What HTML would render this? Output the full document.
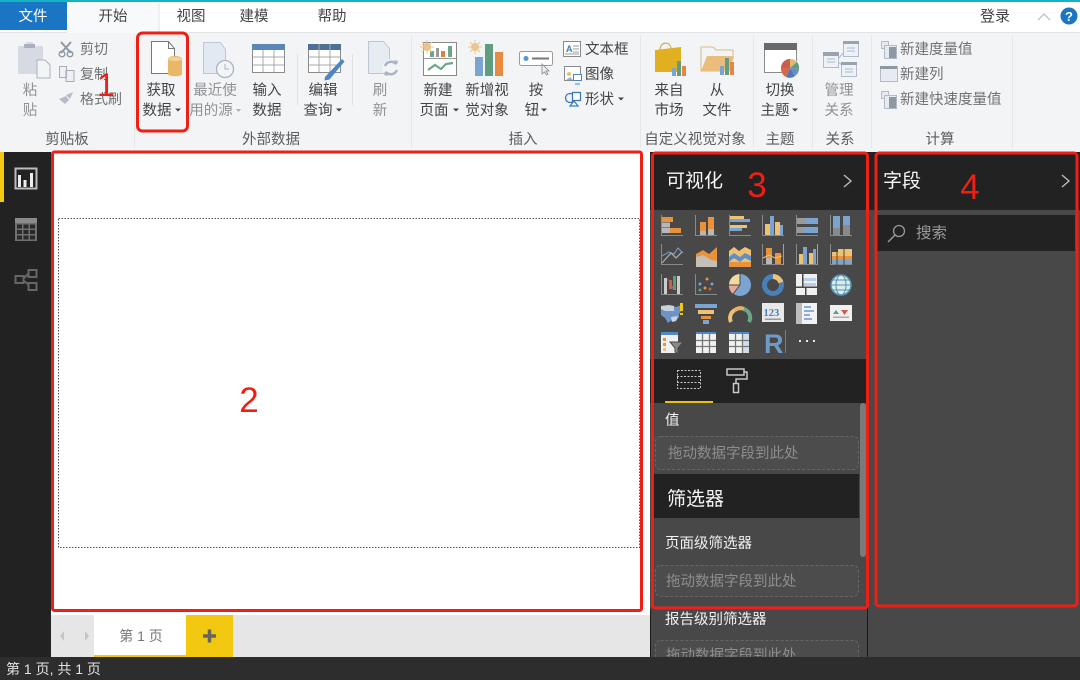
<!DOCTYPE html>
<html><head><meta charset="utf-8">
<style>
html,body{margin:0;padding:0;width:1080px;height:680px;overflow:hidden;background:#fff}
svg{display:block;filter:blur(.35px)}
text{font-family:"Liberation Sans","Noto Sans CJK SC",sans-serif;font-size:14.500px;fill:#444}
.c{text-anchor:middle}
.g{fill:#8f9296}
.d{fill:#6f7275}
.w{fill:#f2f2f2}
.dz{fill:#8d8d8d}
.r{font-size:35px;fill:#f01e14}
.t{font-size:19px;fill:#f5f5f5}
.l{fill:#5a5d60}
</style></head><body>
<svg width="1080" height="680" viewBox="0 0 1080 680" xmlns="http://www.w3.org/2000/svg">
<!-- title / tabs -->
<rect width="1080" height="33" fill="#fff"/>
<rect width="1080" height="2" fill="#12b5c0"/>
<rect y="2" width="67" height="28" fill="#1a76c4"/>
<rect x="67" y="2" width="92" height="31" fill="#f8f9fa"/>
<line x1="159" y1="2" x2="159" y2="32" stroke="#e4e4e4"/>
<text class="c" x="33" y="21" style="fill:#fff">文件</text>
<text class="c" x="113" y="21">开始</text>
<text class="c" x="191" y="21">视图</text>
<text class="c" x="254" y="21">建模</text>
<text class="c" x="332" y="21">帮助</text>
<text class="c" x="995" y="21" style="font-size:15px">登录</text>
<path d="M1038 20l6-6 6 6" fill="none" stroke="#c4c4c4" stroke-width="1.400"/>
<circle cx="1069" cy="16" r="8.500" fill="#1a76c4"/>
<text class="c" x="1069" y="21" style="fill:#fff;font-size:13px;font-weight:bold">?</text>
<!-- ribbon -->
<rect y="33" width="1080" height="119" fill="#f3f4f6"/>
<line x1="0" y1="32.500" x2="67" y2="32.500" stroke="#e2e3e5"/><line x1="159" y1="32.500" x2="1080" y2="32.500" stroke="#e2e3e5"/>
<g stroke="#e6e7e9"><path d="M134.500 36V148M411.500 36V148M640.500 36V148M753.500 36V148M812.500 36V148M871.500 36V148M1012.500 36V148"/><path d="M297.500 54V105M352.500 54V105" stroke="#e0e1e3"/></g>

<!-- paste -->
<path d="M18 46h8v-4h7v4h10v28H18z" fill="#d5dae3"/>
<rect x="24" y="44" width="11" height="4" fill="#a9b0bc"/>
<path d="M37 60h8l5 5v13H37z" fill="#f3f4f6" stroke="#a9b3c2"/>
<text class="c g" x="30" y="95">粘</text><text class="c g" x="30" y="115">贴</text>
<!-- cut, copy, brush -->
<path d="M61 42l10 11M71 42L61 53" stroke="#8f98a5" stroke-width="2" fill="none"/><circle cx="62" cy="54" r="2.800" fill="none" stroke="#8f98a5" stroke-width="1.400"/><circle cx="70" cy="54" r="2.800" fill="none" stroke="#8f98a5" stroke-width="1.400"/>
<path d="M59.500 66.500h7v11h-7zM66 70.500h8v11h-8z" fill="#eef0f3" stroke="#a8adb5"/>
<path d="M59 99l6 5 4-4-3-4zM66 95l7-3-3 7z" fill="#b6bcc6"/>
<text class="d" x="80" y="54" style="font-size:14px">剪切</text><text class="d" x="80" y="79" style="font-size:14px">复制</text><text class="d" x="80" y="104" style="font-size:14px">格式刷</text>

<!-- get data -->
<path d="M151.500 41.500h17l6 7v25h-23z" fill="#fff" stroke="#777"/><path d="M168.500 41.500v7h6" fill="none" stroke="#777"/>
<path d="M168 59c0-4 14-4 14 0v15c0 3-14 3-14 0z" fill="#e8b868"/><ellipse cx="175" cy="59" rx="7" ry="2" fill="#f2d192"/>
<text class="c" x="161" y="95">获取</text><text class="c" x="157" y="115">数据</text>
<path d="M175 108.500h6l-3 3z" fill="#444"/>
<!-- recent -->
<path d="M203.500 42.500h17l5 7v24h-22z" fill="#e2e9f3" stroke="#bcc8d8"/><circle cx="225" cy="69" r="8.500" fill="#f3f4f6" stroke="#a9b5c6" stroke-width="1.300"/><path d="M225 64v5h4" stroke="#a9b5c6" fill="none"/>
<text class="c g" x="215" y="95">最近使</text><text class="c g" x="211" y="115">用的源</text><path d="M236 109h5l-2.500 3z" fill="#b0b0b0"/>
<!-- enter data -->
<rect x="252.500" y="44.500" width="32" height="28" fill="#fff" stroke="#8b8b8b"/><rect x="252" y="44" width="33" height="6" fill="#5b86b8"/>
<path d="M263 50v22M274 50v22M253 57h31M253 65h31" stroke="#a8a8a8" fill="none"/>
<text class="c" x="267" y="95">输入</text><text class="c" x="267" y="115">数据</text>
<!-- edit query -->
<rect x="308.500" y="44.500" width="32" height="28" fill="#fff" stroke="#8b8b8b"/><rect x="308" y="44" width="33" height="6" fill="#4f6f96"/>
<path d="M319 44v28M330 44v28M309 57h31M309 65h31" stroke="#a8a8a8" fill="none"/>
<path d="M325 77l17-18 2.500 2.500-15 18-5 1z" fill="#4a86c5"/>
<text class="c" x="323" y="95">编辑</text><text class="c" x="318" y="115">查询</text><path d="M336 108.500h6l-3 3z" fill="#444"/>
<!-- refresh -->
<path d="M368.500 41.500h15l6 7v25h-21z" fill="#e7ecf3" stroke="#bcc6d4"/>
<circle cx="391" cy="68" r="9" fill="#f3f4f6"/>
<path d="M385 66a6.500 6.500 0 0 1 11-2M397 70a6.500 6.500 0 0 1-11 2" fill="none" stroke="#a9b5c3" stroke-width="2.500"/>
<path d="M394 60l4 1-1 4zM388 76l-4-1 1-4z" fill="#a9b5c3"/>
<text class="c g" x="380" y="95">刷</text><text class="c g" x="380" y="115">新</text>

<!-- new page -->
<rect x="423.500" y="42.500" width="33" height="33" fill="#fff" stroke="#8a8a8a"/>
<line x1="424" y1="58.500" x2="456" y2="58.500" stroke="#999"/>
<rect x="430" y="51" width="4" height="6" fill="#6aa687"/><rect x="441" y="51" width="4" height="6" fill="#e27f3f"/><rect x="448" y="46" width="4" height="11" fill="#6aa687"/><rect x="436" y="48" width="3" height="9" fill="#999"/>
<path d="M428 70l7-5 6 4 5-5 7-1" fill="none" stroke="#6aa687" stroke-width="2.200"/>
<circle cx="427" cy="47" r="4" fill="#e8bf80"/><path d="M427 40v14M420 47h14M422 42l10 10M432 42l-10 10" stroke="#ecc78f"/>
<text class="c" x="438" y="95">新建</text><text class="c" x="434" y="115">页面</text><path d="M453 108.500h6l-3 3z" fill="#444"/>
<!-- new visual -->
<circle cx="475" cy="47" r="4" fill="#ecc78f"/><path d="M475 40v14M468 47h14M470 42l10 10M480 42l-10 10" stroke="#ecc78f"/>
<rect x="475" y="57" width="8" height="19" fill="#7ba4cf"/><rect x="485" y="44" width="8" height="32" fill="#5f9c80"/><rect x="495" y="52" width="8" height="24" fill="#e88a42"/>
<text class="c" x="487" y="95">新增视</text><text class="c" x="487" y="115">觉对象</text>
<!-- button -->
<rect x="519.500" y="51.500" width="33" height="14" rx="2" fill="#fff" stroke="#9a9a9a"/>
<circle cx="526" cy="58.500" r="2.500" fill="#5b96c9"/><line x1="532" y1="58.500" x2="549" y2="58.500" stroke="#777" stroke-width="2"/>
<path d="M542 64l0 10 2.500-2 2 3 1.500-1-2-3 3 0z" fill="#eee" stroke="#888" stroke-width=".8"/>
<text class="c" x="536" y="95">按</text><text class="c" x="532" y="115">钮</text><path d="M541 108.500h6l-3 3z" fill="#444"/>
<!-- text box etc -->
<rect x="563.500" y="41.500" width="17" height="15" fill="#fff" stroke="#8a8a8a"/>
<text x="566" y="52" style="font-size:9px;fill:#3b79b8;font-weight:bold">A</text><path d="M573 46h6M573 49h6M573 52h6M565 54h14" stroke="#999"/>
<text x="585" y="54">文本框</text>
<rect x="564.500" y="66.500" width="16" height="14" fill="#fff" stroke="#8a8a8a"/><circle cx="569" cy="74" r="2" fill="#e8bf80"/><path d="M566 80l4-3 3 3z" fill="#8fb3d8"/>
<rect x="573.500" y="74.500" width="8" height="6" fill="#fff" stroke="#4a86c5"/><path d="M575 84h5" stroke="#4a86c5"/>
<text x="585" y="79">图像</text>
<circle cx="570" cy="98" r="4.500" fill="none" stroke="#3b79b8" stroke-width="1.300"/><rect x="572.500" y="92.500" width="8" height="8" fill="#fff" stroke="#3b79b8" stroke-width="1.300"/><path d="M570 106l4-5 4 5z" fill="#fff" stroke="#3b79b8" stroke-width="1.200"/>
<text x="585" y="104">形状</text><path d="M618 97.500h6l-3 3z" fill="#444"/>

<!-- market -->
<path d="M655 50l26-3v25h-26z" fill="#e0b020"/><path d="M660 50c0-9 11-9 11-1" fill="none" stroke="#c9b16a" stroke-width="1.200"/>
<rect x="672" y="68" width="4" height="8" fill="#7ba4cf"/><rect x="677" y="61" width="4" height="15" fill="#5f9c80"/><rect x="682" y="66" width="4" height="10" fill="#e8853f"/>
<text class="c" x="669" y="95">来自</text><text class="c" x="669" y="115">市场</text>
<!-- folder -->
<path d="M701 47h12l3 3h17v8l-4 13h-28z" fill="#f3f4f6" stroke="#d9bc88"/><path d="M701 71l6-15h27l-5 15z" fill="#ebbd7d"/>
<rect x="720" y="66" width="4" height="9" fill="#7ba4cf"/><rect x="725" y="58" width="4" height="17" fill="#5f9c80"/><rect x="730" y="62" width="4" height="13" fill="#e8853f"/>
<text class="c" x="717" y="95">从</text><text class="c" x="717" y="115">文件</text>

<!-- theme -->
<rect x="764.500" y="43.500" width="32" height="29" fill="#fff" stroke="#8b8b8b"/><rect x="764" y="43" width="33" height="7" fill="#6a6a6a"/>
<circle cx="790" cy="68" r="9.500" fill="#f3f4f6"/><path d="M790 68V59a9 9 0 0 1 7 3z" fill="#e9b56e"/><path d="M790 68l7-6a9 9 0 0 1 2 7z" fill="#5f9c80"/><path d="M790 68l9 1a9 9 0 0 1-4 7z" fill="#6b8fc0"/><path d="M790 68l5 8a9 9 0 0 1-9 1z" fill="#4c7bbd"/><path d="M790 68l-4 9a9 9 0 0 1-5-9z" fill="#d9674a"/><path d="M790 68h-9a9 9 0 0 1 9-9z" fill="#c9604d"/>
<text class="c" x="780" y="95">切换</text><text class="c" x="775" y="115">主题</text><path d="M792 108.500h6l-3 3z" fill="#444"/>
<!-- relations -->
<path d="M838 59l6-7M838 62l4 3" stroke="#b0bccd" fill="none"/>
<g fill="#eef1f6" stroke="#b0bccd"><rect x="823.500" y="52.500" width="15" height="15"/><rect x="843.500" y="41.500" width="15" height="15"/><rect x="841.500" y="62.500" width="15" height="14"/></g>
<path d="M823 52h16v4h-16zM843 41h16v3h-16zM841 62h16v3h-16z" fill="#9aa2ae"/>
<path d="M827 59h8M827 62h8M847 48h8M847 51h8M845 69h8M845 72h8" stroke="#b0bccd"/>
<text class="c g" x="839" y="95">管理</text><text class="c g" x="839" y="115">关系</text>

<!-- calc -->
<g fill="#e7ebf1" stroke="#b0bac8"><rect x="881.500" y="41.500" width="7" height="7"/><rect x="884.500" y="45.500" width="12" height="13"/><rect x="880.500" y="66.500" width="17" height="15"/><rect x="881.500" y="91.500" width="7" height="7"/><rect x="884.500" y="95.500" width="12" height="13"/></g>
<path d="M889 47h7v11h-7zM880 66h17v3h-17zM889 97h7v11h-7z" fill="#8f98a5"/>
<text class="d" x="900" y="54">新建度量值</text><text class="d" x="900" y="79">新建列</text><text class="d" x="900" y="104">新建快速度量值</text>

<text class="c l" x="67" y="144">剪贴板</text>
<text class="c l" x="271" y="144">外部数据</text>
<text class="c l" x="523" y="144">插入</text>
<text class="c l" x="695" y="144">自定义视觉对象</text>
<text class="c l" x="780" y="144">主题</text>
<text class="c l" x="840" y="144">关系</text>
<text class="c l" x="940" y="144">计算</text>

<!-- left rail -->
<rect y="152" width="51" height="505" fill="#222"/>
<rect y="152" width="4" height="50" fill="#f2c811"/>
<rect x="15.500" y="168.500" width="21" height="20" fill="none" stroke="#bcbcbc" stroke-width="2"/>
<path d="M18 187v-12h3v12zM23.500 187v-7h3v7zM30 187v-14h3v14z" fill="#eee"/>
<rect x="15" y="218" width="22" height="23" fill="#707070"/><rect x="15" y="218" width="22" height="5" fill="#8a8a8a"/>
<g fill="#2a2a2a"><rect x="17" y="224.500" width="5" height="4"/><rect x="23.500" y="224.500" width="5" height="4"/><rect x="30" y="224.500" width="5" height="4"/><rect x="17" y="230" width="5" height="4"/><rect x="23.500" y="230" width="5" height="4"/><rect x="30" y="230" width="5" height="4"/><rect x="17" y="235.500" width="5" height="4"/><rect x="23.500" y="235.500" width="5" height="4"/><rect x="30" y="235.500" width="5" height="4"/></g>
<g fill="none" stroke="#666" stroke-width="2"><rect x="15.500" y="276" width="8" height="7"/><rect x="28.500" y="270" width="8" height="7"/><rect x="28.500" y="283" width="8" height="7"/><path d="M24 278l4-4M24 281l4 3"/></g>

<!-- canvas -->
<rect x="51" y="152" width="591" height="463" fill="#fff"/>
<rect x="58.500" y="218.500" width="581" height="329" fill="none" stroke="#555" stroke-dasharray="1.500 1.500"/>
<rect x="51" y="615" width="600" height="42" fill="#e6e6e6"/>
<path d="M64 631l-4 5 4 5z" fill="#c4c4c4"/><path d="M85 631l4 5-4 5z" fill="#c4c4c4"/>
<rect x="94" y="615" width="92" height="40" fill="#fff"/><rect x="94" y="655" width="92" height="2" fill="#f2c811"/>
<text class="c" x="141" y="641" style="fill:#777;font-size:14px">第 1 页</text>
<rect x="186" y="615" width="47" height="42" fill="#f2c811"/>
<path d="M203 636h13M209.500 629.500v13" stroke="#66665e" stroke-width="3.500"/>

<!-- panel 3 -->
<rect x="650" y="152" width="218" height="505" fill="#484848"/>
<rect x="650" y="152" width="218" height="58" fill="#222"/>
<text class="t" x="666" y="187">可视化</text>
<path d="M844 175l7 6-7 6" fill="none" stroke="#bbb" stroke-width="1.400"/>

<!-- viz icons -->
<defs>
<path id="ax" d="M.5 0v20.500H22" fill="none" stroke="#8a8a8a"/>
</defs>
<g transform="translate(661 215)"><use href="#ax"/><rect x="1" y="2" width="11" height="5" fill="#e8923a"/><rect x="1" y="7.500" width="8" height="5" fill="#b8b8b8"/><rect x="9" y="13" width="11" height="5" fill="#e8923a"/><rect x="1" y="13" width="8" height="5" fill="#b8b8b8"/></g>
<g transform="translate(695 215)"><use href="#ax"/><rect x="5" y="7" width="6" height="13" fill="#e8923a"/><rect x="5" y="16" width="6" height="4" fill="#b8b8b8"/><rect x="13" y="2" width="6" height="18" fill="#e8923a"/><rect x="13" y="14" width="6" height="6" fill="#b8b8b8"/></g>
<g transform="translate(729 215)"><use href="#ax"/><rect x="1" y="1" width="14" height="3" fill="#eec273"/><rect x="1" y="4" width="20" height="3" fill="#7ba4d1"/><rect x="1" y="10" width="17" height="3" fill="#eec273"/><rect x="1" y="13" width="12" height="3" fill="#7ba4d1"/></g>
<g transform="translate(762 215)"><use href="#ax"/><rect x="3" y="9" width="5" height="11" fill="#eec273"/><rect x="8" y="1" width="4" height="19" fill="#7ba4d1"/><rect x="13" y="7" width="5" height="13" fill="#eec273"/><rect x="18" y="10" width="3" height="10" fill="#7ba4d1"/></g>
<g transform="translate(796 215)"><use href="#ax"/><rect x="1" y="3" width="9" height="6" fill="#9a9a9a"/><rect x="10" y="3" width="12" height="6" fill="#7ba4d1"/><rect x="1" y="12" width="7" height="6" fill="#9a9a9a"/><rect x="8" y="12" width="14" height="6" fill="#7ba4d1"/></g>
<g transform="translate(830 215)"><use href="#ax"/><rect x="3" y="1" width="7" height="12" fill="#7ba4d1"/><rect x="3" y="13" width="7" height="7" fill="#8a8a8a"/><rect x="13" y="1" width="7" height="9" fill="#7ba4d1"/><rect x="13" y="10" width="7" height="10" fill="#8a8a8a"/></g>

<g transform="translate(661 244)"><use href="#ax"/><path d="M1 19l9-10 5 5 6-6" fill="none" stroke="#b0a8a0" stroke-width="1.300"/><path d="M1 12l7-4 5 2 4-6 5 5" fill="none" stroke="#7ba4d1" stroke-width="1"/></g>
<g transform="translate(695 244)"><path d="M1 10l7-4 6 4 8-7v20H1z" fill="#e8923a"/><path d="M1 13l7-2 8 5 6 1v6H1z" fill="#c4c0b8"/></g>
<g transform="translate(729 244)"><path d="M0 7l5-4 5 4 6-4 6 3v17H0z" fill="#eec273"/><path d="M0 13l5-4 6 4 5-4 6 3v5l-6-3-5 4-6-4-5 4z" fill="#5f8fc6"/><path d="M0 18h22v5H0z" fill="#e8923a"/></g>
<g transform="translate(762 244)"><use href="#ax"/><path d="M21.500 0v21" stroke="#e8923a"/><rect x="4" y="4" width="6" height="16" fill="#e8923a"/><rect x="4" y="14" width="6" height="6" fill="#b8b8b8"/><rect x="13" y="9" width="6" height="11" fill="#e8923a"/><path d="M1 14l6-3 6 3 7-2" fill="none" stroke="#eec273"/></g>
<g transform="translate(796 244)"><use href="#ax"/><path d="M21.500 0v21" stroke="#e8923a"/><rect x="3" y="10" width="4" height="10" fill="#eec273"/><rect x="7" y="3" width="4" height="17" fill="#7ba4d1"/><rect x="13" y="9" width="4" height="11" fill="#eec273"/><rect x="17" y="5" width="3" height="15" fill="#7ba4d1"/></g>
<g transform="translate(830 244)"><use href="#ax"/><rect x="2" y="8" width="20" height="4" fill="#eec273"/><rect x="8" y="5" width="14" height="3" fill="#eec273"/><rect x="2" y="12" width="20" height="4" fill="#e8923a"/><rect x="2" y="16" width="20" height="4" fill="#7ba4d1"/><path d="M7 8v13M14 5v16" stroke="#484848"/></g>

<g transform="translate(661 274)"><use href="#ax"/><rect x="3" y="4" width="3" height="16" fill="#ccc"/><rect x="8" y="6" width="3" height="9" fill="#c9604d"/><rect x="12" y="2" width="3" height="14" fill="#5f9c80"/><rect x="16" y="2" width="3" height="18" fill="#ccc"/><path d="M6 6l2 0M11 12l1 3" stroke="#c9604d"/></g>
<g transform="translate(695 274)"><use href="#ax"/><g fill="#e8923a"><circle cx="12" cy="5" r="1.500"/><circle cx="10" cy="14" r="1.500"/></g><g fill="#7ba4d1"><circle cx="5" cy="10" r="1.500"/><circle cx="17" cy="10" r="1.500"/></g><g fill="#5f9c80"><circle cx="5" cy="16" r="1.500"/></g><g fill="#c9604d"><circle cx="15" cy="15" r="1.500"/></g></g>
<g transform="translate(729 274)"><circle cx="11" cy="11" r="11" fill="#7ba4d1"/><path d="M11 11V0A11 11 0 0 0 0 11z" fill="#f2d9a0"/><path d="M11 11H0A11 11 0 0 0 4 20z" fill="#e8a89a"/><path d="M11 11V0M11 11H0M11 11L4 20" stroke="#484848"/></g>
<g transform="translate(762 274)"><circle cx="11" cy="11" r="8.500" fill="none" stroke="#4a7fb8" stroke-width="5"/><path d="M11 2.500a8.500 8.500 0 0 1 8 6" fill="none" stroke="#eec273" stroke-width="5"/></g>
<g transform="translate(796 274)"><rect width="21" height="21" fill="#f0f0f0"/><path d="M7 4h13v3H7zM7 9h13v3H7z" fill="#b9cde4"/><rect y="12.500" width="21" height="1.500" fill="#484848"/><rect x="9" y="13" width="1.500" height="8" fill="#484848"/><rect x="6" width="1.500" height="13" fill="#484848"/></g>
<g transform="translate(830 274)"><circle cx="11" cy="11" r="10" fill="#d8efe8" stroke="#5a8fb5" stroke-width="1.500"/><ellipse cx="11" cy="11" rx="5" ry="10" fill="none" stroke="#5a8fb5"/><path d="M1 11h20M3 6h16M3 16h16" stroke="#5a8fb5"/></g>

<g transform="translate(661 303)"><path d="M0 3l8-1 7 2 6-2v5l-3 4v3l-3 4-4-1-4 3-3-5-4-3z" fill="#6f93c4"/><path d="M0 3l8-1 5 1v5H4L0 6zM10 14l7-1-2 5-4 1z" fill="#c9d3df"/><path d="M19 0h3v8h-3zM19 10h3v2h-3z" fill="#f2c811"/></g>
<g transform="translate(695 303)"><rect x="0" y="1" width="22" height="4" fill="#7ba4d1"/><rect x="3" y="7" width="16" height="4" fill="#eec273"/><rect x="6" y="13" width="10" height="3" fill="#e8923a"/><rect x="8" y="17" width="6" height="4" fill="#7ba4d1"/></g>
<g transform="translate(729 303)"><path d="M2 19a9 9 0 0 1 4-12" fill="none" stroke="#eec273" stroke-width="4"/><path d="M6 7a9 9 0 0 1 9-1" fill="none" stroke="#e8b060" stroke-width="4"/><path d="M15 6a9 9 0 0 1 5 13" fill="none" stroke="#6aa687" stroke-width="4"/></g>
<g transform="translate(762 303)"><rect width="22" height="19" fill="#e8e8e8"/><text x="1.500" y="13" style="font-family:'Liberation Serif',serif;font-size:10.500px;fill:#4a7fb8;font-weight:bold">123</text><rect x="3" y="15.500" width="16" height="1.500" fill="#999"/></g>
<g transform="translate(796 303)"><rect width="21" height="21" fill="#f2f2f2"/><rect x="0" width="6" height="21" fill="#bdbdbd"/><path d="M8 4h7M8 8h10M8 12h6M8 16h8" stroke="#6b95c9" stroke-width="1.500"/></g>
<g transform="translate(830 303)"><rect y="2" width="22" height="16" fill="#f0f0f0"/><path d="M3 11l3-4 3 4z" fill="#5f9c80"/><path d="M11 7h7l-3.500 5z" fill="#d9584a"/><rect x="3" y="13.500" width="16" height="1.500" fill="#aaa"/></g>

<g transform="translate(661 332)"><rect width="17" height="21" fill="#f0f0f0"/><rect width="17" height="3" fill="#4f8ac6"/><rect x="2" y="6" width="3" height="3" fill="#e8923a"/><rect x="2" y="11" width="3" height="3" fill="#e8923a"/><rect x="2" y="16" width="3" height="3" fill="#eec273"/><path d="M9 10h13l-5 6v6l-3-2v-4z" fill="#8a8a8a" stroke="#484848"/></g>
<g transform="translate(696 332)"><rect width="20" height="21" fill="#f2f2f2"/><rect width="20" height="2" fill="#4f8ac6"/><path d="M6.500 2v19M13.500 2v19M0 8.500h20M0 14.500h20" stroke="#777" stroke-width="1.300"/></g>
<g transform="translate(729 332)"><rect width="20" height="21" fill="#d3dde9"/><rect x="0" width="14" height="21" fill="#f2f2f2"/><rect width="20" height="2" fill="#4f8ac6"/><path d="M6.500 2v19M13.500 2v19M0 8.500h20M0 14.500h20" stroke="#777" stroke-width="1.300"/></g>
<text x="764" y="353" style="font-size:27px;font-weight:bold;fill:#6f9ac8">R</text>
<rect x="785" y="330" width="1" height="23" fill="#8a7a55"/>
<g fill="#e8e8e8"><rect x="799" y="340" width="2" height="2"/><rect x="806" y="340" width="2" height="2"/><rect x="813" y="340" width="2" height="2"/></g>

<!-- dark tool strip -->
<rect x="650" y="359" width="218" height="44" fill="#222"/>
<rect x="665" y="401" width="48" height="2" fill="#e8c010"/>
<g fill="none" stroke="#c8c8c8" stroke-dasharray="2 1.500"><rect x="677.500" y="370.500" width="23" height="18"/><path d="M677 376.500h24M677 382.500h24"/></g>
<path d="M727 369h17v6h-17zM744 372h3v7h-11v4" fill="none" stroke="#c8c8c8" stroke-width="1.500"/><rect x="733.500" y="383.500" width="5" height="9" fill="none" stroke="#c8c8c8" stroke-width="1.500"/>

<!-- fields well -->
<text class="w" x="665" y="425">值</text>
<rect x="655.500" y="436.500" width="203" height="33" rx="5" fill="#4c4c4c" stroke="#666" stroke-dasharray="3 2"/>
<text class="dz" x="668" y="458">拖动数据字段到此处</text>
<rect x="651" y="474" width="208" height="44" fill="#222"/>
<text class="t" x="667" y="505">筛选器</text>
<rect x="860" y="403" width="6" height="154" rx="3" fill="#7a7a7a"/>
<text class="w" x="665" y="548">页面级筛选器</text>
<rect x="655.500" y="565.500" width="203" height="31" rx="5" fill="#4c4c4c" stroke="#666" stroke-dasharray="3 2"/>
<text class="dz" x="666" y="586">拖动数据字段到此处</text>
<text class="w" x="665" y="624">报告级别筛选器</text>
<rect x="655.500" y="640.500" width="203" height="31" rx="5" fill="#4c4c4c" stroke="#666" stroke-dasharray="3 2"/>
<text class="dz" x="666" y="660">拖动数据字段到此处</text>
<rect x="650" y="609" width="1" height="48" fill="#1a1a1a"/>
<rect x="867" y="152" width="1" height="505" fill="#1a1a1a"/>

<!-- panel 4 -->
<rect x="868" y="152" width="212" height="505" fill="#484848"/>
<rect x="868" y="152" width="212" height="58" fill="#222"/>
<text class="t" x="883" y="187">字段</text>
<path d="M1062 175l7 6-7 6" fill="none" stroke="#bbb" stroke-width="1.400"/>
<rect x="877" y="215" width="198" height="36" fill="#222"/>
<circle cx="899" cy="231" r="5.500" fill="none" stroke="#999" stroke-width="1.300"/><path d="M895 235l-7 7" stroke="#999" stroke-width="1.500"/>
<text x="916" y="238" style="fill:#9a9a9a;font-size:15.500px">搜索</text>

<!-- status -->
<rect y="657" width="1080" height="23" fill="#2d2d2d"/>
<text x="6" y="674" style="fill:#e2e2e2;font-size:14px">第 1 页, 共 1 页</text>

<!-- red annotations -->
<g fill="none" stroke="#f01e14" stroke-width="3">
<rect x="137.500" y="33" width="50" height="98" rx="5"/>
<rect x="52.500" y="152" width="589" height="458.500" rx="2"/>
<rect x="652.500" y="153" width="215" height="455" rx="3"/>
<rect x="876" y="153" width="201" height="453" rx="3"/>
</g>
<text class="c" x="106" y="96" style="font-size:32px;fill:#f01e14">1</text>
<text class="c r" x="249" y="412">2</text>
<text class="c r" x="757" y="197">3</text>
<text class="c r" x="970" y="199">4</text>
</svg>
</body></html>
